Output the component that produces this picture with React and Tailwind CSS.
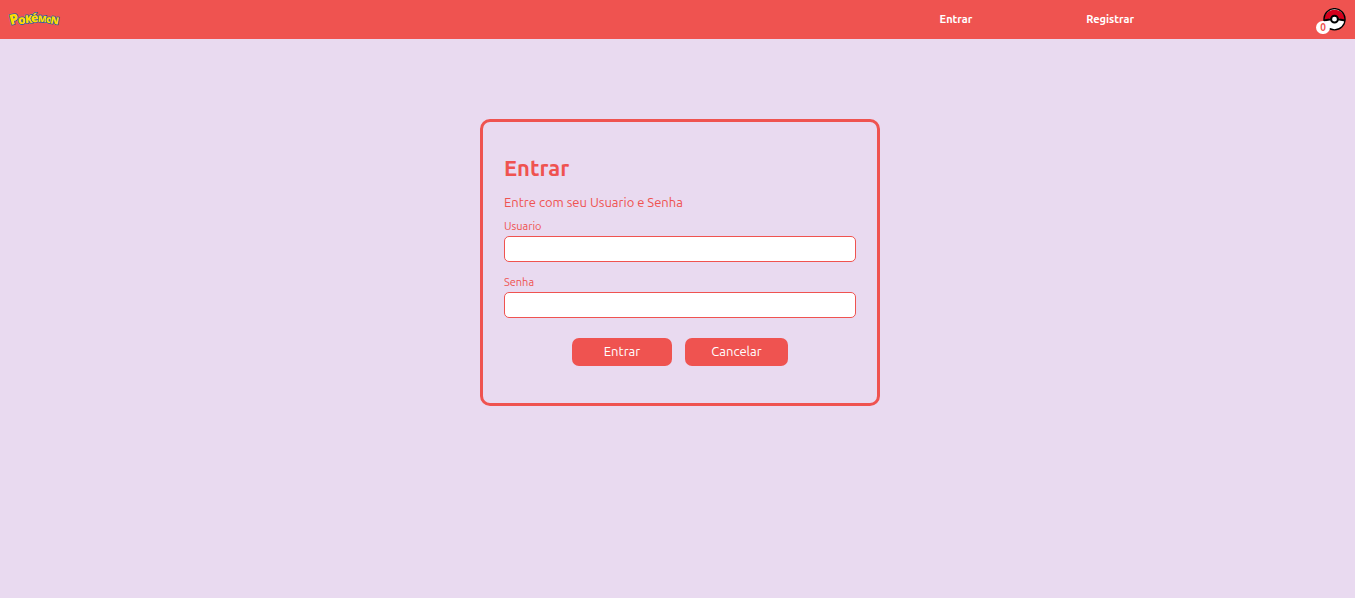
const LETTERS = [
  { char: 'P', x: 6, y: 14, size: 14, turn: -14 },
  { char: 'o', x: 13, y: 14, size: 12, turn: -4 },
  { char: 'K', x: 20, y: 13, size: 11, turn: -4 },
  { char: 'é', x: 26, y: 12, size: 12, turn: -6 },
  { char: 'M', x: 33, y: 12, size: 9, turn: 4 },
  { char: 'o', x: 40, y: 13, size: 10, turn: 4 },
  { char: 'N', x: 45, y: 14, size: 10, turn: 10 },
];

function Logo() {
  return (
    <svg viewBox="0 0 50 20" className="h-5 w-[50px] overflow-visible" role="img" aria-label="Pokémon">
      <g
        fill="#ffdc00"
        stroke="#35609f"
        strokeWidth="1.6"
        strokeLinejoin="round"
        paintOrder="stroke"
        fontFamily="'Open Sans', 'Noto Sans', sans-serif"
        fontWeight="800"
        textAnchor="middle"
      >
        {LETTERS.map((l) => (
          <text key={l.x} x={l.x} y={l.y} fontSize={l.size} transform={`rotate(${l.turn} ${l.x} ${l.y})`}>
            {l.char}
          </text>
        ))}
      </g>
    </svg>
  );
}

function Pokeball() {
  return (
    <svg viewBox="0 0 24 24" className="h-6 w-6" aria-hidden="true">
      <circle cx="11.5" cy="11.2" r="10.8" fill="#fff" />
      <path d="M.7 12.5a10.8 10.8 0 1 1 21.6 0L16 10.5H7z" fill="#d5001c" />
      <path d="M.9 12.6Q5 11.8 8 11.2h7q3 .6 7.1 1.4" fill="none" stroke="#000" strokeWidth="2" />
      <circle cx="11.5" cy="11.2" r="10.6" fill="none" stroke="#000" strokeWidth="1.3" />
      <circle cx="11.5" cy="11.2" r="3.4" fill="#fff" stroke="#000" strokeWidth="2" />
    </svg>
  );
}

function Field({ id, label, type }) {
  return (
    <div className="flex flex-col">
      <label htmlFor={id} className="text-[11px] leading-5">{label}</label>
      <input
        id={id}
        type={type}
        className="h-[26px] w-full rounded-[5px] border border-[#ef5350] bg-white px-2 text-xs outline-none"
      />
    </div>
  );
}

export default function App() {
  return (
    <div className="min-h-screen bg-[#e9daf0] font-['Ubuntu','Noto_Sans',sans-serif] text-[#ef5350]">
      <header className="flex h-[39px] items-center justify-between bg-[#ef5350] pl-[9px] pr-2 text-white">
        <a href="#"><Logo /></a>
        <div className="flex items-center gap-[182px]">
          <nav className="flex gap-[114px] text-[11px] font-bold">
            <a href="#entrar">Entrar</a>
            <a href="#registrar">Registrar</a>
          </nav>
          <a href="#pokedex" className="relative block pl-[7px]">
            <Pokeball />
            <span className="absolute -bottom-[2px] left-0 flex h-[13px] w-[14px] items-center justify-center rounded-full bg-white text-[10px] font-bold text-[#ef5350]">
              0
            </span>
          </a>
        </div>
      </header>
      <main className="flex justify-center pl-[5px] pt-20">
        <form
          className="w-full max-w-[400px] rounded-[10px] border-3 border-[#ef5350] px-[21px] pb-[37px] pt-8"
          onSubmit={(e) => e.preventDefault()}
        >
          <h1 className="text-[22px] font-bold leading-7">Entrar</h1>
          <p className="mb-1 mt-2.5 text-[13px] leading-5">Entre com seu Usuario e Senha</p>
          <div className="flex flex-col gap-2.5">
            <Field id="usuario" label="Usuario" type="text" />
            <Field id="senha" label="Senha" type="password" />
          </div>
          <div className="mt-5 flex justify-center gap-[13px] text-[13px] text-white">
            <button type="submit" className="h-7 w-[100px] rounded-[7px] bg-[#ef5350]">Entrar</button>
            <button type="button" className="h-7 w-[103px] rounded-[7px] bg-[#ef5350]">Cancelar</button>
          </div>
        </form>
      </main>
    </div>
  );
}
